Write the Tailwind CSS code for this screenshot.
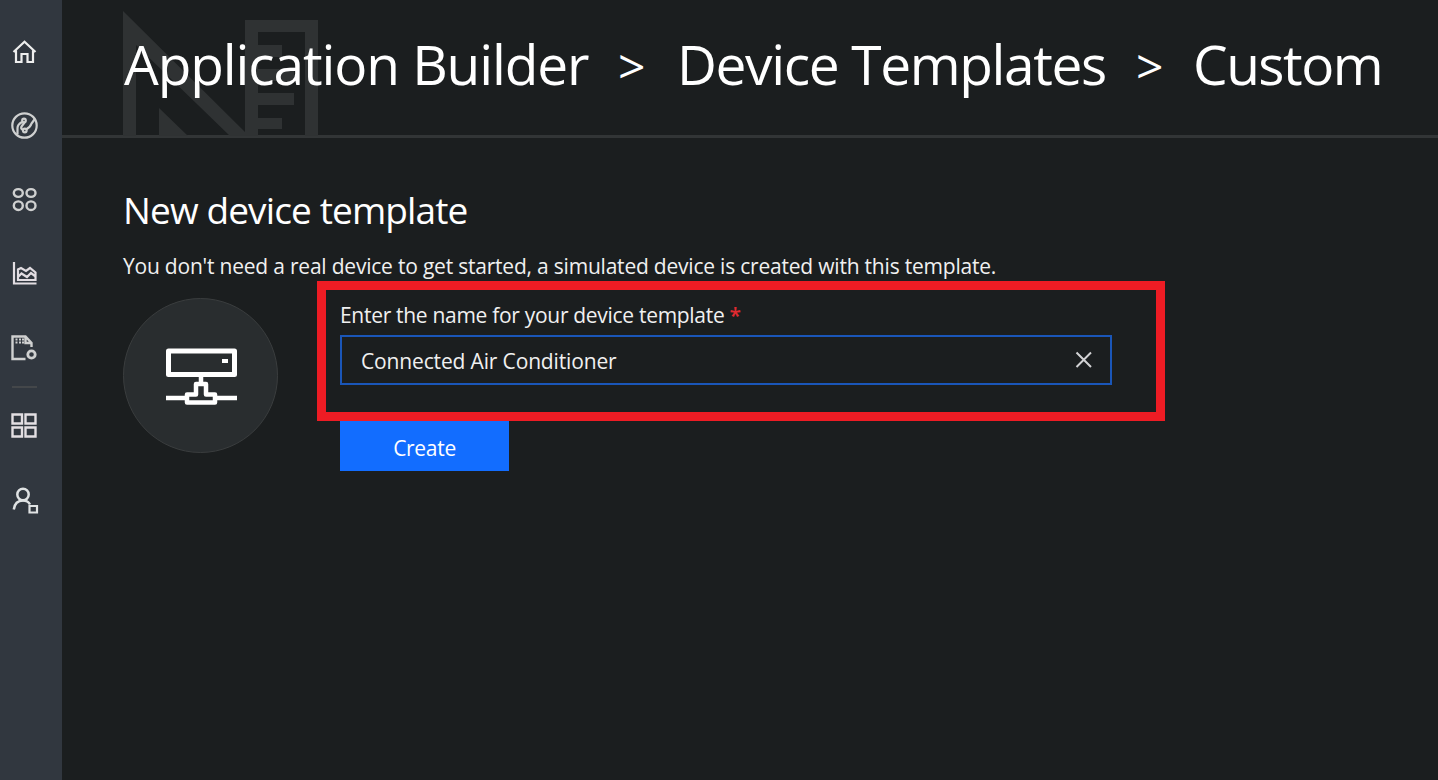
<!DOCTYPE html>
<html lang="en">
<head>
<meta charset="utf-8">
<title>Application Builder</title>
<script src="https://cdn.jsdelivr.net/npm/@tailwindcss/browser@4"></script>
</head>
<body class="h-[780px] w-[1438px] overflow-hidden bg-[#1b1e1f] font-['Open_Sans','Noto_Sans',sans-serif] text-white">
<div class="flex h-full">
  <nav class="flex w-[62px] shrink-0 flex-col items-start bg-[#31373f] pt-[40px] text-[#cfd0d0]">
    <svg class="ml-[12px] h-[25px] w-[25px]" viewBox="0 0 25 25" fill="none" stroke="#eee" stroke-width="2.200"><path d="M1.500 12 12.500 1.800 23.500 12M4 10.500V22H9.500V14H15.500V22H21V10.500"/></svg>
    <svg class="mt-[47px] ml-[11px] h-[28px] w-[28px]" viewBox="0 0 28 28" fill="none" stroke="currentColor" stroke-width="2.200"><circle cx="13.500" cy="13.500" r="12.200"/><path d="M6.500 22.500V16Q6.500 12.500 11 10M15 17.500Q19.500 15 20.500 11.500L23.500 7.500M13.500 10.500 10.500 14.500Q9.500 17 12 18"/><circle cx="13" cy="8.500" r="1.800"/><circle cx="13.800" cy="18.500" r="1.800"/></svg>
    <svg class="mt-[47px] ml-[12px] h-[26px] w-[26px]" viewBox="0 0 26 26" fill="none" stroke="currentColor" stroke-width="2.400"><ellipse cx="6.300" cy="6" rx="4.500" ry="3.900"/><ellipse cx="19" cy="6" rx="4.500" ry="3.900"/><ellipse cx="6.300" cy="18.700" rx="4.500" ry="4.300"/><ellipse cx="19" cy="18.700" rx="4.500" ry="4.300"/></svg>
    <svg class="mt-[48px] ml-[12px] h-[26px] w-[26px]" viewBox="0 0 26 26" fill="none" stroke="#e2dde2" stroke-width="2.200"><path d="M2 1V22.500H24.500M6 19V8.500L9 7 14 10 18 7 23.500 11.500V19ZM6 16 9.500 12.500 15 16 19 12 23 15"/></svg>
    <svg class="mt-[48px] ml-[11px] h-[27px] w-[28px]" viewBox="0 0 28 27" fill="none" stroke="currentColor" stroke-width="2.400"><path d="M14.500 24H1.500V1.500H14.500L20.500 8V12M14.500 2V8H20.500"/><path d="M4.500 4.500H6.500M8 4.500H10M11 4.500H13M4.500 7.500H6.500M8 7.500H10M11 7.500H13" stroke-width="1.800"/><circle cx="20.500" cy="19.500" r="3.700" stroke-width="2.800"/></svg>
    <div class="mt-[24px] ml-[12px] h-[2px] w-[25px] bg-[#44474a]"></div>
    <svg class="mt-[25px] ml-[11px] h-[26px] w-[27px]" viewBox="0 0 27 26" fill="none" stroke="#e3dfe3" stroke-width="2.400"><path d="M1.500 1.500H11V10.500H1.500ZM14.500 1.500H24.500V10.500H14.500ZM1.500 14.500H11V23.500H1.500ZM14.500 14.500H24.500V23.500H14.500Z"/></svg>
    <svg class="mt-[48px] ml-[12px] h-[28px] w-[28px]" viewBox="0 0 28 28" fill="none" stroke="#dfe2e3" stroke-width="2.500"><circle cx="11" cy="7.500" r="5.700"/><path d="M1.800 22.500Q3 13.500 11 13.500 16 13.500 18 17.500"/><path d="M17.500 19H25V25.500H17.500Z" stroke-width="2.200"/></svg>
  </nav>
  <main class="flex flex-1 flex-col">
    <header class="relative h-[138px] border-b-[3px] border-[#323536] pt-[34px] pl-[62px]">
      <svg class="absolute top-[10px] left-[61px] h-[126px] w-[196px]" viewBox="0 0 196 126" fill="#2f3233"><path fill-rule="evenodd" d="M0 1 122 122V126H107L13 35V126H0ZM36 98 65 126H36Z"/><path d="M122 10H195V126H182V22H135V35H159V47H135V59H171V71H135V83H171V95H135V108H159V119H135V126H122Z"/></svg>
      <h1 class="relative flex text-[55px] leading-[60px] whitespace-nowrap"><span class="w-[494px] tracking-[-1.1px]">Application Builder</span><span class="w-[59px] pt-[2px] text-[48px]">&gt;</span><span class="w-[459px] tracking-[-1.35px]">Device Templates</span><span class="w-[57px] pt-[2px] text-[48px]">&gt;</span><span class="tracking-[-1.5px]">Custom</span></h1>
    </header>
    <section class="pt-[48px] pl-[61px]">
      <h2 class="text-[37px] leading-[48px] tracking-[-0.87px]">New device template</h2>
      <p class="mt-[18px] text-[21px] leading-[28px] tracking-[-0.21px] text-[#f0f0f0]">You don't need a real device to get started, a simulated device is created with this template.</p>
      <div class="mt-px flex items-start">
        <div class="mt-[17px] flex h-[155px] w-[155px] items-center justify-center rounded-full border border-[#3a3d3e] bg-[#292d2f]">
          <svg class="h-[72px] w-[72px]" viewBox="165 340 72 72" fill="none" stroke="#fff" stroke-width="5" stroke-linejoin="round"><path d="M168.500 351H234.500V374.500H168.500Z"/><path d="M222 361H228" stroke-width="4"/><path d="M201 376V382M166 398H186M217 398H237M187 402.500V394.500H196V384H206V394.500H215V402.500Z" stroke-width="4.500"/></svg>
        </div>
        <div class="ml-[39px]">
          <div class="h-[140px] w-[848px] border-[9px] border-[#ee1c24] pt-[11px] pl-[14px]">
            <label class="block text-[21px] leading-[28px] tracking-[-0.3px] text-[#f0f0f0]">Enter the name for your device template <span class="font-semibold text-[#e02a30]">*</span></label>
            <div class="mt-[6px] flex h-[50px] w-[772px] items-center justify-between border-2 border-[#1a56b8] pr-[17px] pl-[19px]">
              <span class="pt-[2px] text-[21px] leading-[28px] tracking-[-0.15px] text-[#f0f0f0]">Connected Air Conditioner</span>
              <svg class="h-[18px] w-[18px]" viewBox="0 0 18 18" stroke="#d2d2d4" stroke-width="2"><path d="M1.500 1.500 16 16M16 1.500 1.500 16"/></svg>
            </div>
          </div>
          <button class="ml-[23px] block h-[50px] w-[169px] bg-[#126dff] pt-[3px] text-[21px] leading-[28px] tracking-[-0.3px]">Create</button>
        </div>
      </div>
    </section>
  </main>
</div>
</body>
</html>
